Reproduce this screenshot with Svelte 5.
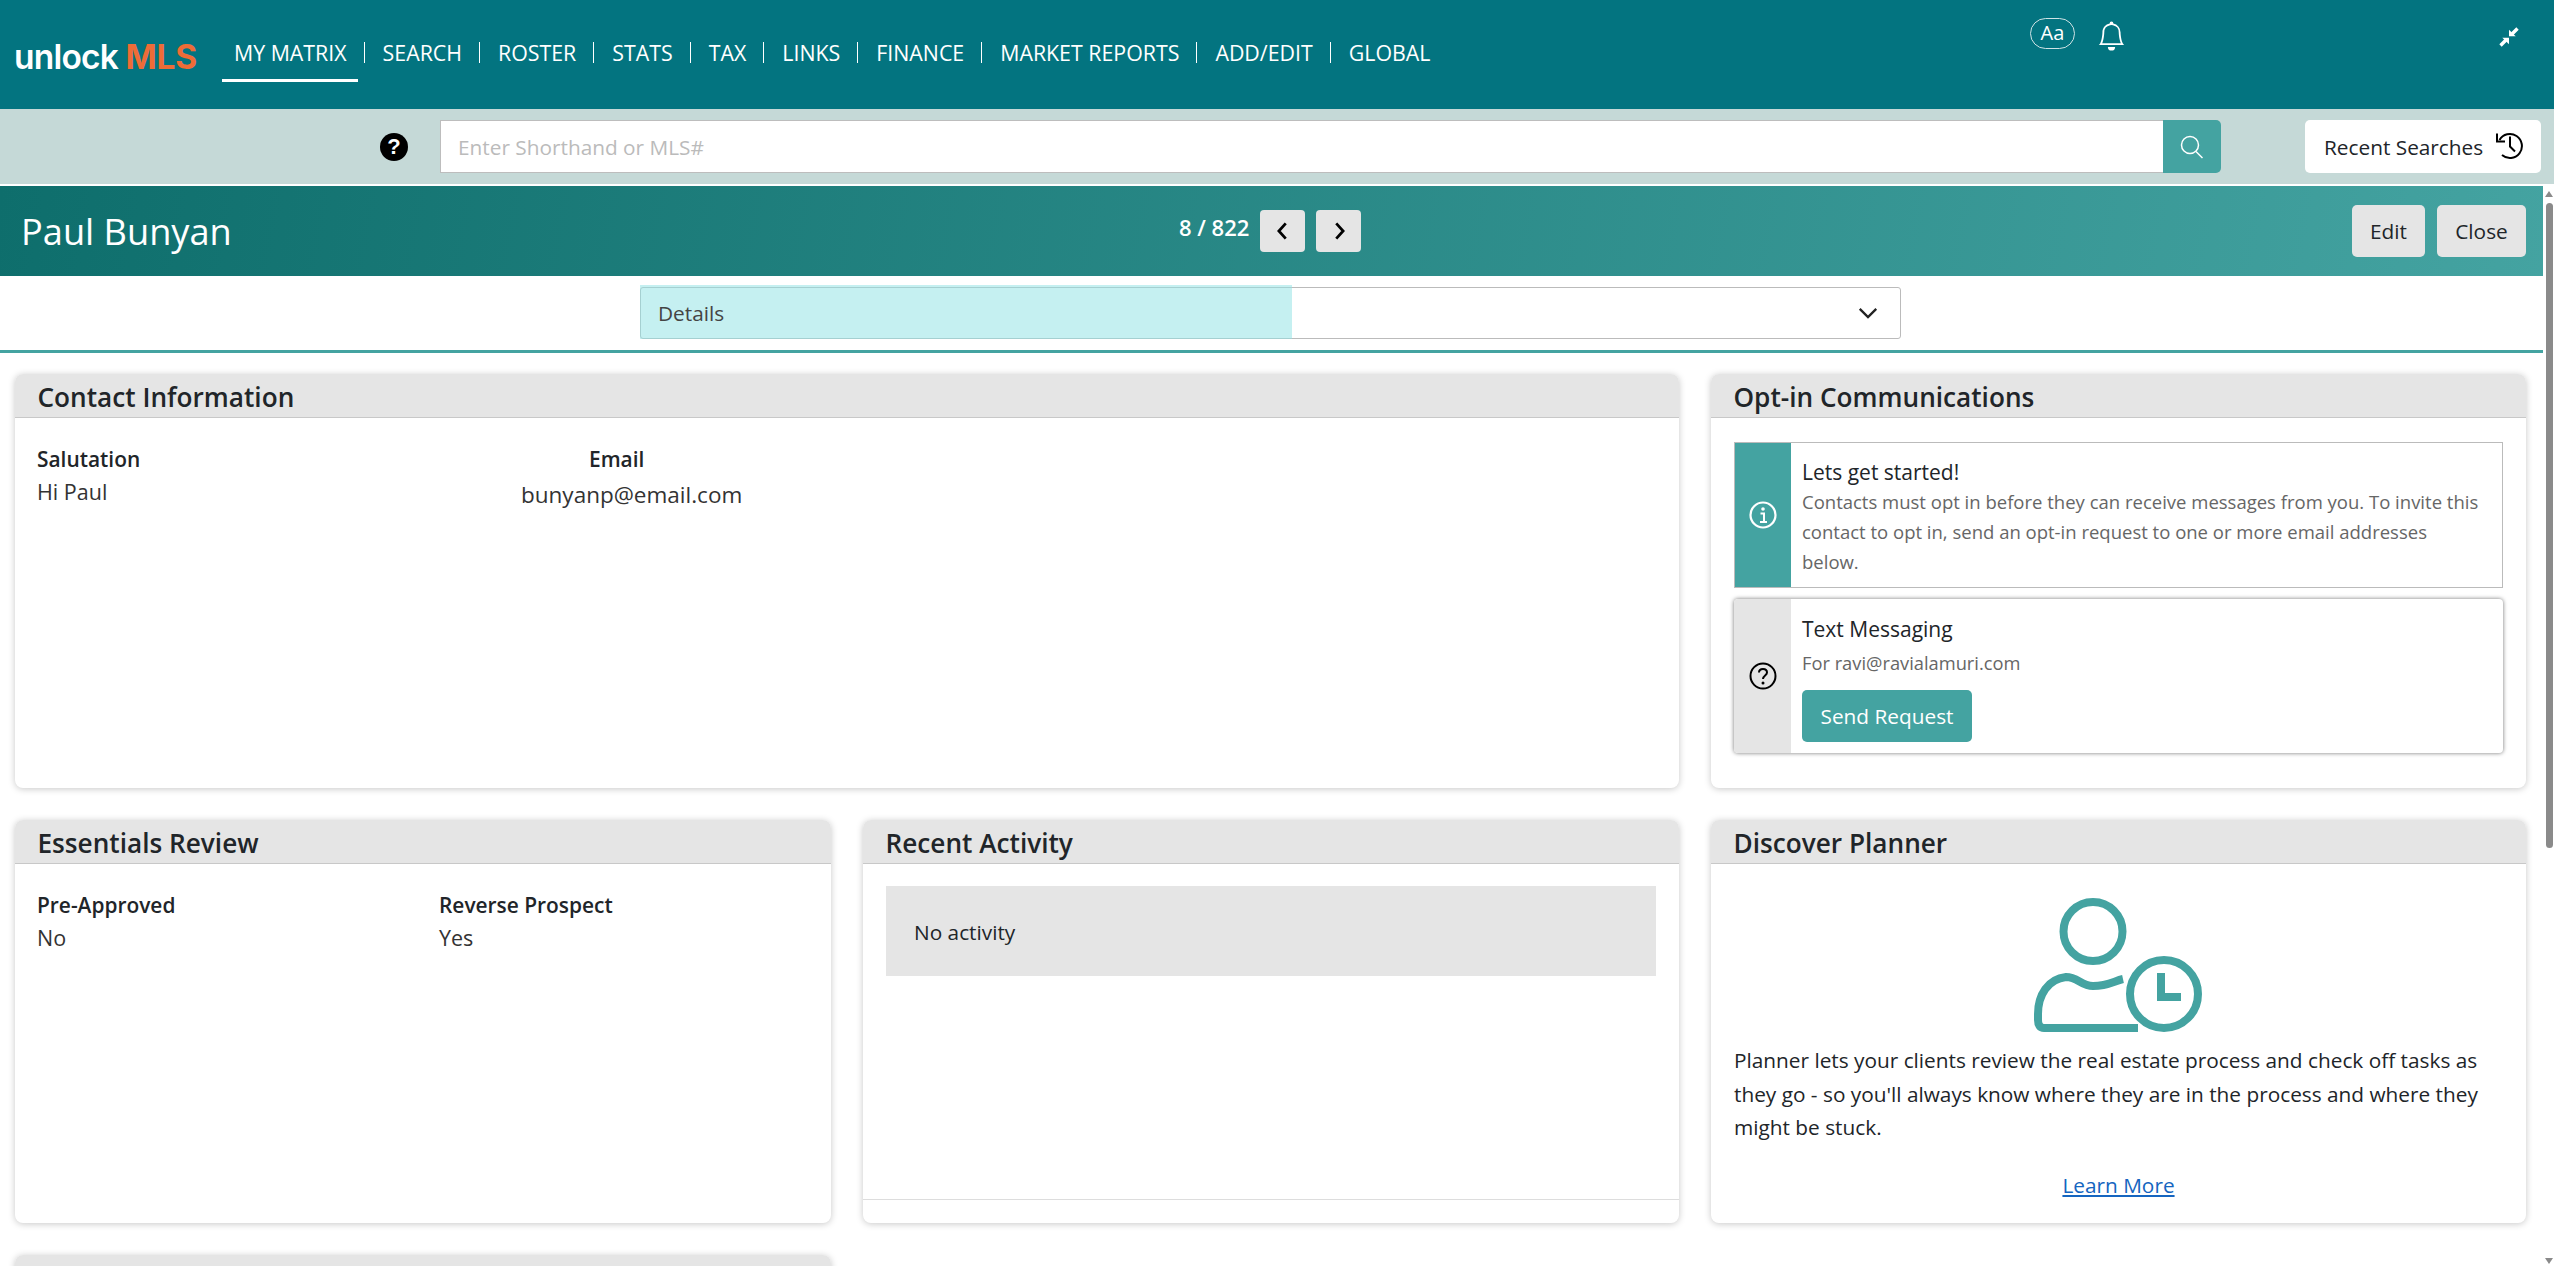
<script>
  const nav = ["MY MATRIX", "SEARCH", "ROSTER", "STATS", "TAX", "LINKS", "FINANCE", "MARKET REPORTS", "ADD/EDIT", "GLOBAL"];
</script>

<div class="page">
  <header class="topbar">
    <div class="logo">unlock <span>MLS</span></div>
    <nav class="nav">
      {#each nav as item, i}
        <a href="#top" class="nav-link" class:active={i === 0}>{item}</a>
      {/each}
    </nav>
    <div class="top-tools">
      <span class="aa">Aa</span>
      <svg class="bell" viewBox="0 0 16 16" fill="#fff"><path d="M8 16a2 2 0 0 0 2-2H6a2 2 0 0 0 2 2zM8 1.918l-.797.161A4.002 4.002 0 0 0 4 6c0 .628-.134 2.197-.459 3.742-.16.767-.376 1.566-.663 2.258h10.244c-.287-.692-.502-1.49-.663-2.258C12.134 8.197 12 6.628 12 6a4.002 4.002 0 0 0-3.203-3.92L8 1.917zM14.22 12c.223.447.481.801.78 1H1c.299-.199.557-.553.78-1C2.68 10.2 3 6.88 3 6c0-2.42 1.72-4.44 4.005-4.901a1 1 0 1 1 1.99 0A5.002 5.002 0 0 1 13 6c0 .88.32 4.2 1.22 6z"/></svg>
      <svg class="collapse" viewBox="0 0 20 20" fill="#fff" stroke="#fff"><path d="M10 2.700V9.300H16.700z" stroke="none"/><path d="M10 17.300V10.700H3.300z" stroke="none"/><path d="M13 7 18.500 1.500M7 13 1.500 18.500" stroke-width="3.400"/></svg>
    </div>
  </header>

  <div class="searchbar">
    <span class="help">?</span>
    <div class="search-group">
      <input class="search-input" placeholder="Enter Shorthand or MLS#" />
      <button class="search-btn" aria-label="Search">
        <svg viewBox="0 0 24 24" fill="none" stroke="#fff" stroke-width="1.500"><circle cx="10" cy="10" r="8.500"/><path d="M16 16.500 22.500 23"/></svg>
      </button>
    </div>
    <button class="recent">
      Recent Searches
      <svg viewBox="0 0 27 27" fill="none" stroke="#000" stroke-width="2"><path d="M3.500 8A12 12 0 1 1 6 23"/><path d="M1 1.500V9.500H9"/><path d="M14 4.500V14.500L19 19.500"/></svg>
    </button>
  </div>

  <div class="body">
    <div class="content">
      <div class="titlebar">
        <h1>Paul Bunyan</h1>
        <div class="pager">
          <span class="count">8 / 822</span>
          <button class="page-btn" aria-label="Previous">
            <svg viewBox="0 0 16 16" fill="none" stroke="#000" stroke-width="2"><path d="M10 2.500 5 8l5 5.500"/></svg>
          </button>
          <button class="page-btn" aria-label="Next">
            <svg viewBox="0 0 16 16" fill="none" stroke="#000" stroke-width="2"><path d="M6 2.500 11 8l-5 5.500"/></svg>
          </button>
        </div>
        <div class="title-actions">
          <button class="grey-btn edit">Edit</button>
          <button class="grey-btn close">Close</button>
        </div>
      </div>

      <div class="select-row">
        <div class="select">
          <div class="select-fill">Details</div>
          <svg viewBox="0 0 16 16" fill="none" stroke="#222" stroke-width="1.700"><path d="M2 5l6 6 6-6"/></svg>
        </div>
      </div>

      <div class="grid">
        <section class="card wide">
          <h2>Contact Information</h2>
          <div class="card-body contact">
            <div class="field">
              <strong>Salutation</strong>
              <span>Hi Paul</span>
            </div>
            <div class="field email">
              <strong>Email</strong>
              <span>bunyanp@email.com</span>
            </div>
          </div>
        </section>

        <section class="card">
          <h2>Opt-in Communications</h2>
          <div class="card-body opt">
            <div class="notice">
              <div class="strip teal">
                <svg viewBox="0 0 28 28" fill="none" stroke="#fff" stroke-width="2.200"><circle cx="14" cy="14" r="12.500"/><path d="M11.500 12.500H15V20.500M11 21H18" stroke-width="2"/><circle cx="14" cy="8" r="1.800" fill="#fff" stroke="none"/></svg>
              </div>
              <div class="notice-text">
                <h3>Lets get started!</h3>
                <p>Contacts must opt in before they can receive messages from you. To invite this contact to opt in, send an opt-in request to one or more email addresses below.</p>
              </div>
            </div>
            <div class="notice raised">
              <div class="strip grey">
                <svg viewBox="0 0 28 28" fill="none" stroke="#000" stroke-width="2"><circle cx="14" cy="14" r="12.500"/><path d="M10 10.500C10 8 12 7 14 7c2.500 0 4 1.500 4 3.500 0 3-4 3-4 6.500"/><circle cx="14" cy="21" r="1.500" fill="#000" stroke="none"/></svg>
              </div>
              <div class="notice-text">
                <h3>Text Messaging</h3>
                <p class="for">For ravi@ravialamuri.com</p>
                <button class="send">Send Request</button>
              </div>
            </div>
          </div>
        </section>

        <section class="card row2">
          <h2>Essentials Review</h2>
          <div class="card-body essentials">
            <div class="field"><strong>Pre-Approved</strong><span>No</span></div>
            <div class="field"><strong>Reverse Prospect</strong><span>Yes</span></div>
          </div>
        </section>

        <section class="card row2">
          <h2>Recent Activity</h2>
          <div class="card-body activity">
            <div class="empty">No activity</div>
          </div>
          <div class="card-foot"></div>
        </section>

        <section class="card row2">
          <h2>Discover Planner</h2>
          <div class="card-body planner">
            <svg class="planner-icon" viewBox="0 0 168 134" fill="none" stroke="#44a3a1" stroke-width="8">
              <circle cx="59" cy="33.500" r="29.500"/>
              <circle cx="130" cy="96" r="34"/>
              <path d="M127 75V99H147"/>
              <path d="M89 81C80 83 74 88 59 88 47 88 44 79 32 79 14 81 4 97 4 116V122C4 127 6 130 10 130H104"/>
            </svg>
            <p>Planner lets your clients review the real estate process and check off tasks as they go - so you'll always know where they are in the process and where they might be stuck.</p>
            <a href="#top" class="learn">Learn More</a>
          </div>
        </section>

        <section class="card">
          <h2>&nbsp;</h2>
        </section>
      </div>
    </div>

    <div class="scrollbar">
      <span class="arrow up"></span>
      <div class="track"><div class="thumb"></div></div>
      <span class="arrow down"></span>
    </div>
  </div>
</div>

<style>
  :global(body) {
    margin: 0;
    background: #fff;
  }

  .page {
    height: 1266px;
    overflow: hidden;
    display: flex;
    flex-direction: column;
    font-family: "Open Sans", "Noto Sans", sans-serif;
    color: #212529;
  }

  button {
    font-family: inherit;
    border: none;
    cursor: pointer;
  }

  /* top nav */
  .topbar {
    height: 109px;
    flex: none;
    background: #037480;
    display: flex;
    align-items: flex-start;
    color: #fff;
  }

  .logo {
    width: 216px;
    flex: none;
    padding: 38px 0 0 14px;
    box-sizing: border-box;
    font-family: Inter, "Liberation Sans", sans-serif;
    font-weight: 600;
    font-size: 33.500px;
    line-height: 38px;
    letter-spacing: -0.8px;
    white-space: nowrap;
  }

  .logo span {
    color: #ee6c37;
    font-weight: 700;
    letter-spacing: -0.3px;
  }

  .nav {
    display: flex;
    padding-top: 42px;
  }

  .nav-link {
    position: relative;
    display: block;
    height: 40px;
    padding: 0 18px;
    font-size: 21.350px;
    line-height: 21px;
    color: #fff;
    text-decoration: none;
    white-space: nowrap;
  }

  .nav-link:not(:last-child)::after {
    content: "";
    position: absolute;
    right: 0;
    top: 0;
    height: 21px;
    width: 1px;
    background: #fff;
  }

  .nav-link.active::before {
    content: "";
    position: absolute;
    left: 6px;
    right: 7px;
    bottom: 0;
    height: 3px;
    background: #fff;
  }

  .top-tools {
    margin-left: auto;
    display: flex;
    align-items: flex-start;
    padding: 18px 35px 0 0;
  }

  .aa {
    width: 45px;
    height: 31px;
    box-sizing: border-box;
    border: 1px solid #cfe3e5;
    border-radius: 16px;
    text-align: center;
    font-size: 20px;
    line-height: 28px;
  }

  .bell {
    width: 29px;
    height: 30px;
    margin: 3px 0 0 22px;
  }

  .collapse {
    width: 20px;
    height: 20px;
    margin: 9px 0 0 373px;
  }

  /* search row */
  .searchbar {
    height: 75px;
    flex: none;
    background: #c5d9d7;
    display: flex;
    align-items: center;
    padding: 0 13px 0 380px;
    box-sizing: border-box;
  }

  .help {
    width: 28px;
    height: 28px;
    border-radius: 50%;
    background: #000;
    color: #fff;
    font-family: "Liberation Sans", sans-serif;
    font-weight: 700;
    font-size: 22px;
    line-height: 28px;
    text-align: center;
  }

  .search-group {
    display: flex;
    margin-left: 32px;
    height: 53px;
  }

  .search-input {
    width: 1723px;
    box-sizing: border-box;
    border: 1px solid #bdbdbd;
    border-right: none;
    padding: 0 17px;
    font-family: inherit;
    font-size: 20.800px;
    background: #fff;
    outline: none;
  }

  .search-input::placeholder {
    color: #bbb;
  }

  .search-btn {
    width: 58px;
    background: #44a3a1;
    border-radius: 0 5px 5px 0;
    padding: 0;
    display: flex;
    align-items: center;
    justify-content: center;
  }

  .search-btn svg {
    width: 24px;
    height: 24px;
  }

  .recent {
    width: 236px;
    height: 53px;
    margin-left: auto;
    background: #fff;
    border-radius: 5px;
    display: flex;
    align-items: center;
    justify-content: space-between;
    padding: 0 18px 0 19px;
    font-size: 20.800px;
    color: #212529;
    white-space: nowrap;
  }

  .recent svg {
    width: 27px;
    height: 27px;
    flex: none;
    margin-top: -2px;
  }

  /* below the sticky rows */
  .body {
    flex: 1;
    min-height: 0;
    display: flex;
    margin-top: 2px;
    background: #fff;
  }

  .content {
    flex: 1;
    min-width: 0;
  }

  .titlebar {
    height: 90px;
    display: flex;
    align-items: center;
    position: relative;
    background: linear-gradient(100deg, #0e6e6c 0%, #44a3a1 100%);
    color: #fff;
    padding: 0 17px 0 21px;
    box-sizing: border-box;
  }

  h1 {
    margin: 0;
    font-size: 36.200px;
    font-weight: 400;
  }

  .pager {
    position: absolute;
    left: 1179px;
    top: 24px;
    display: flex;
    align-items: center;
    gap: 11px;
  }

  .count {
    font-size: 22px;
    font-weight: 600;
    margin-top: -8px;
  }

  .page-btn {
    width: 45px;
    height: 42px;
    padding: 0;
    background: #e5e5e5;
    border-radius: 4px;
    display: flex;
    align-items: center;
    justify-content: center;
  }

  .page-btn svg {
    width: 22px;
    height: 22px;
  }

  .title-actions {
    margin-left: auto;
    display: flex;
    gap: 12px;
  }

  .grey-btn {
    height: 52px;
    padding: 0;
    background: #e5e5e5;
    border-radius: 5px;
    font-size: 20.800px;
    color: #212529;
  }

  .edit {
    width: 73px;
  }

  .close {
    width: 89px;
  }

  .select-row {
    height: 77px;
    box-sizing: border-box;
    border-bottom: 3px solid #44a3a1;
    padding: 11px 0 0 640px;
  }

  .select {
    position: relative;
    width: 1261px;
    height: 52px;
    box-sizing: border-box;
    border: 1px solid #bbb;
    border-radius: 3px;
    display: flex;
    align-items: center;
    justify-content: flex-end;
    padding-right: 21px;
  }

  .select svg {
    width: 22px;
    height: 22px;
  }

  .select-fill {
    position: absolute;
    left: -1px;
    top: -3px;
    bottom: -1px;
    width: 652px;
    background: rgba(146, 226, 228, 0.53);
    padding-left: 18px;
    box-sizing: border-box;
    font-size: 20.800px;
    line-height: 56px;
    color: #444;
  }

  /* cards */
  .grid {
    display: grid;
    grid-template-columns: 816px 816px 1fr;
    grid-template-rows: 414px 403px 200px;
    gap: 32px;
    padding: 21px 17px 0 15px;
  }

  .card {
    background: #fff;
    border-radius: 8px;
    box-shadow: 0 1px 7px rgba(0, 0, 0, 0.22);
    display: flex;
    flex-direction: column;
    overflow: hidden;
  }

  .wide {
    grid-column: span 2;
  }

  h2 {
    margin: 0;
    height: 44px;
    flex: none;
    box-sizing: border-box;
    background: #e5e5e5;
    border-bottom: 1px solid #c8c8c8;
    padding-left: 22.500px;
    font-size: 26.200px;
    font-weight: 600;
    line-height: 46px;
  }

  .card-body {
    flex: 1;
    min-height: 0;
    padding: 22px 23px;
    font-size: 20.800px;
  }

  .field {
    display: flex;
    flex: none;
    flex-direction: column;
  }

  .field strong {
    font-weight: 600;
    font-size: 20.900px;
    line-height: 30px;
  }

  .field span {
    margin-top: 3px;
    line-height: 30px;
    font-size: 21.500px;
    color: #333;
  }

  .contact {
    display: flex;
    padding: 26px 22px 0;
  }

  .contact .field {
    width: 484px;
  }

  .email strong {
    padding-left: 68px;
  }

  .email span {
    font-size: 22.500px;
    margin-top: 6px;
  }

  .opt {
    display: flex;
    flex-direction: column;
    gap: 11px;
    padding-top: 24px;
  }

  .notice {
    display: flex;
    border: 1px solid #bbb;
  }

  .raised {
    border: none;
    border-radius: 4px;
    box-shadow: 0 0 4px rgba(0, 0, 0, 0.55);
    overflow: hidden;
  }

  .strip {
    width: 56px;
    flex: none;
    display: flex;
    align-items: center;
    justify-content: center;
  }

  .raised .strip {
    width: 57px;
  }

  .strip svg {
    width: 28px;
    height: 28px;
  }

  .teal {
    background: #44a3a1;
  }

  .grey {
    background: #e5e5e5;
  }

  .notice-text {
    padding: 14px 20px 10px 11px;
  }

  .raised .notice-text {
    padding: 15px 11px 11px;
  }

  h3 {
    margin: 0;
    font-size: 21px;
    font-weight: 400;
    line-height: 30px;
  }

  .notice-text p {
    margin: 0;
    font-size: 18.500px;
    line-height: 30px;
    color: #666;
  }

  .notice-text .for {
    margin-top: 2px;
    line-height: 34px;
    font-size: 18.300px;
  }

  .send {
    display: block;
    height: 52px;
    width: 170px;
    margin-top: 10px;
    background: #44a3a1;
    color: #fff;
    border-radius: 5px;
    font-size: 20.800px;
    padding: 0;
  }

  .essentials {
    display: flex;
    padding: 26px 22px 0;
  }

  .essentials .field {
    width: 402px;
  }

  .activity {
    padding-bottom: 0;
  }

  .empty {
    height: 90px;
    background: #e5e5e5;
    padding-left: 28px;
    line-height: 92px;
  }

  .card-foot {
    height: 23px;
    flex: none;
    border-top: 1px solid #ddd;
  }

  .planner {
    padding-top: 34px;
    display: flex;
    flex-direction: column;
  }

  .planner-icon {
    width: 168px;
    height: 134px;
    flex: none;
    margin-left: 300px;
  }

  .planner p {
    margin: 12px 0 0;
    line-height: 33.500px;
  }

  .learn {
    align-self: center;
    margin-top: 25px;
    color: #1565c0;
    line-height: 30px;
  }

  /* page scrollbar */
  .scrollbar {
    width: 11px;
    flex: none;
    display: flex;
    flex-direction: column;
    align-items: center;
    background: #fff;
  }

  .arrow {
    width: 0;
    height: 0;
    flex: none;
    border-left: 4px solid transparent;
    border-right: 4px solid transparent;
  }

  .up {
    margin-top: 5px;
    border-bottom: 6px solid #8a8a8a;
  }

  .down {
    margin-bottom: 2px;
    border-top: 6px solid #8a8a8a;
  }

  .track {
    flex: 1;
    width: 100%;
    padding-top: 6px;
    box-sizing: border-box;
  }

  .thumb {
    width: 7px;
    height: 645px;
    margin-left: 3px;
    border-radius: 4px;
    background: #8a8a8a;
  }
</style>
